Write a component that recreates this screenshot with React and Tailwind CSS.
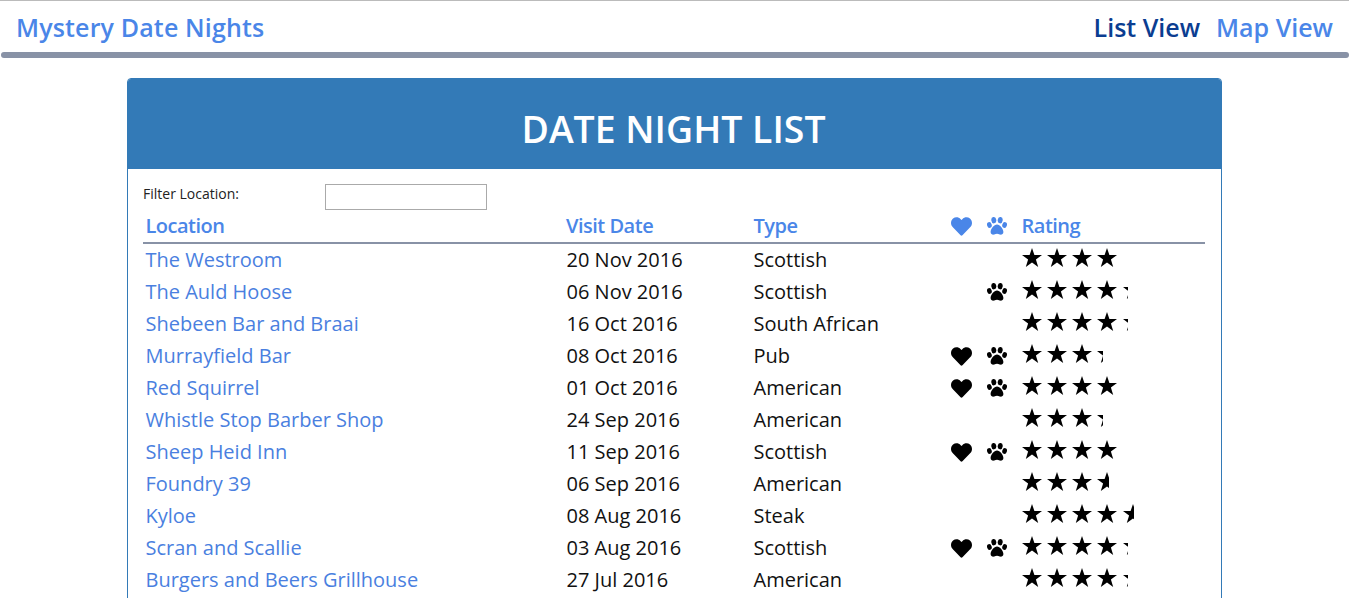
import { FaHeart } from 'react-icons/fa'

const dates = [
  { name: 'The Westroom', date: '20 Nov 2016', type: 'Scottish', heart: false, paw: false, rating: 95 },
  { name: 'The Auld Hoose', date: '06 Nov 2016', type: 'Scottish', heart: false, paw: true, rating: 106 },
  { name: 'Shebeen Bar and Braai', date: '16 Oct 2016', type: 'South African', heart: false, paw: false, rating: 106 },
  { name: 'Murrayfield Bar', date: '08 Oct 2016', type: 'Pub', heart: true, paw: true, rating: 81 },
  { name: 'Red Squirrel', date: '01 Oct 2016', type: 'American', heart: true, paw: true, rating: 95 },
  { name: 'Whistle Stop Barber Shop', date: '24 Sep 2016', type: 'American', heart: false, paw: false, rating: 81 },
  { name: 'Sheep Heid Inn', date: '11 Sep 2016', type: 'Scottish', heart: true, paw: true, rating: 95 },
  { name: 'Foundry 39', date: '06 Sep 2016', type: 'American', heart: false, paw: false, rating: 87 },
  { name: 'Kyloe', date: '08 Aug 2016', type: 'Steak', heart: false, paw: false, rating: 112 },
  { name: 'Scran and Scallie', date: '03 Aug 2016', type: 'Scottish', heart: true, paw: true, rating: 106 },
  { name: 'Burgers and Beers Grillhouse', date: '27 Jul 2016', type: 'American', heart: false, paw: false, rating: 106 },
]

function Star() {
  return (
    <svg viewBox="0 0 20 19" className="w-[20px] h-[19px] shrink-0 mr-[5.3px]">
      <polygon points="10,0 12.4,7 20,7 13.9,11.5 16.2,19 10,14.4 3.8,19 6.1,11.5 0,7 7.6,7" fill="#000" />
    </svg>
  )
}

function Stars({ width }) {
  return (
    <div className="flex overflow-hidden h-[19px] -mt-[5px]" style={{ width }}>
      <Star />
      <Star />
      <Star />
      <Star />
      <Star />
    </div>
  )
}

function Paw({ className }) {
  return (
    <svg viewBox="0 0 20 18" fill="currentColor" className={className}>
      <ellipse cx="2.4" cy="8" rx="2.3" ry="2.9" transform="rotate(-18 2.4 8)" />
      <ellipse cx="6.8" cy="3.2" rx="2.5" ry="3.2" transform="rotate(-8 6.8 3.2)" />
      <ellipse cx="13.2" cy="3.2" rx="2.5" ry="3.2" transform="rotate(8 13.2 3.2)" />
      <ellipse cx="17.6" cy="8" rx="2.3" ry="2.9" transform="rotate(18 17.6 8)" />
      <path d="M10 7.6C7.2 7.6 3.6 12 3.6 15C3.6 17.3 5.8 18 7.3 17.5C8.4 17.1 9 16.8 10 16.8C11 16.8 11.6 17.1 12.7 17.5C14.2 18 16.4 17.3 16.4 15C16.4 12 12.8 7.6 10 7.6Z" />
    </svg>
  )
}

export default function App() {
  return (
    <div className="h-screen overflow-hidden bg-white font-['Open_Sans',sans-serif]">
      <div className="border-t border-[#bbbbbb] h-[52px] pt-[2px] pl-[16px] pr-[16px] flex justify-between items-center">
        <a className="text-[#4a86e8] text-[25px] tracking-[0.15px] font-semibold">Mystery Date Nights</a>
        <div className="flex gap-[16px] text-[25px] font-semibold">
          <a className="text-[#0b3d91]">List View</a>
          <a className="text-[#4a86e8]">Map View</a>
        </div>
      </div>
      <div className="h-[6px] ml-[1px] bg-[#8892a6] rounded-[3px]"></div>

      <div className="mt-[20px] w-[1095px] ml-[127px] min-h-[560px] border border-[#337ab7] rounded-[4px] overflow-hidden">
        <div className="bg-[#337ab7] h-[90px] pt-[11px] pr-[2px] flex items-center justify-center">
          <h1 className="text-white text-[37.4px] font-semibold">DATE NIGHT LIST</h1>
        </div>
        <div className="pl-[15px] pr-[16px] pt-[14px]">
          <div className="flex items-center h-[27px]">
            <label className="text-[14px] text-[#222222] w-[182px] -mt-[6px]">Filter Location:</label>
            <input className="w-[162px] h-[26px] border border-[#aaaaaa] bg-white" />
          </div>
          <div className="grid grid-cols-[420.5px_187.5px_197px_36px_35px_1fr] pl-[2.5px] text-[20px] font-semibold tracking-[-0.5px] text-[#4a86e8] h-[34px] items-center border-b-2 border-[#8892a6]">
            <span>Location</span>
            <span>Visit Date</span>
            <span>Type</span>
            <FaHeart className="text-[21px]" />
            <Paw className="w-[20px] h-[18px] ml-[0.5px]" />
            <span>Rating</span>
          </div>
          {dates.map((d) => (
            <div key={d.name} className="grid grid-cols-[421px_187px_197px_36px_35px_1fr] pl-[2.5px] h-[32px] items-center text-[20px] text-[#111111]">
              <a className="text-[#4a7fe0]">{d.name}</a>
              <span>{d.date}</span>
              <span>{d.type}</span>
              <span>{d.heart && <FaHeart className="text-[21px] text-black" />}</span>
              <span>{d.paw && <Paw className="w-[20px] h-[18px] ml-[0.5px] text-black" />}</span>
              <Stars width={d.rating} />
            </div>
          ))}
        </div>
      </div>
    </div>
  )
}
